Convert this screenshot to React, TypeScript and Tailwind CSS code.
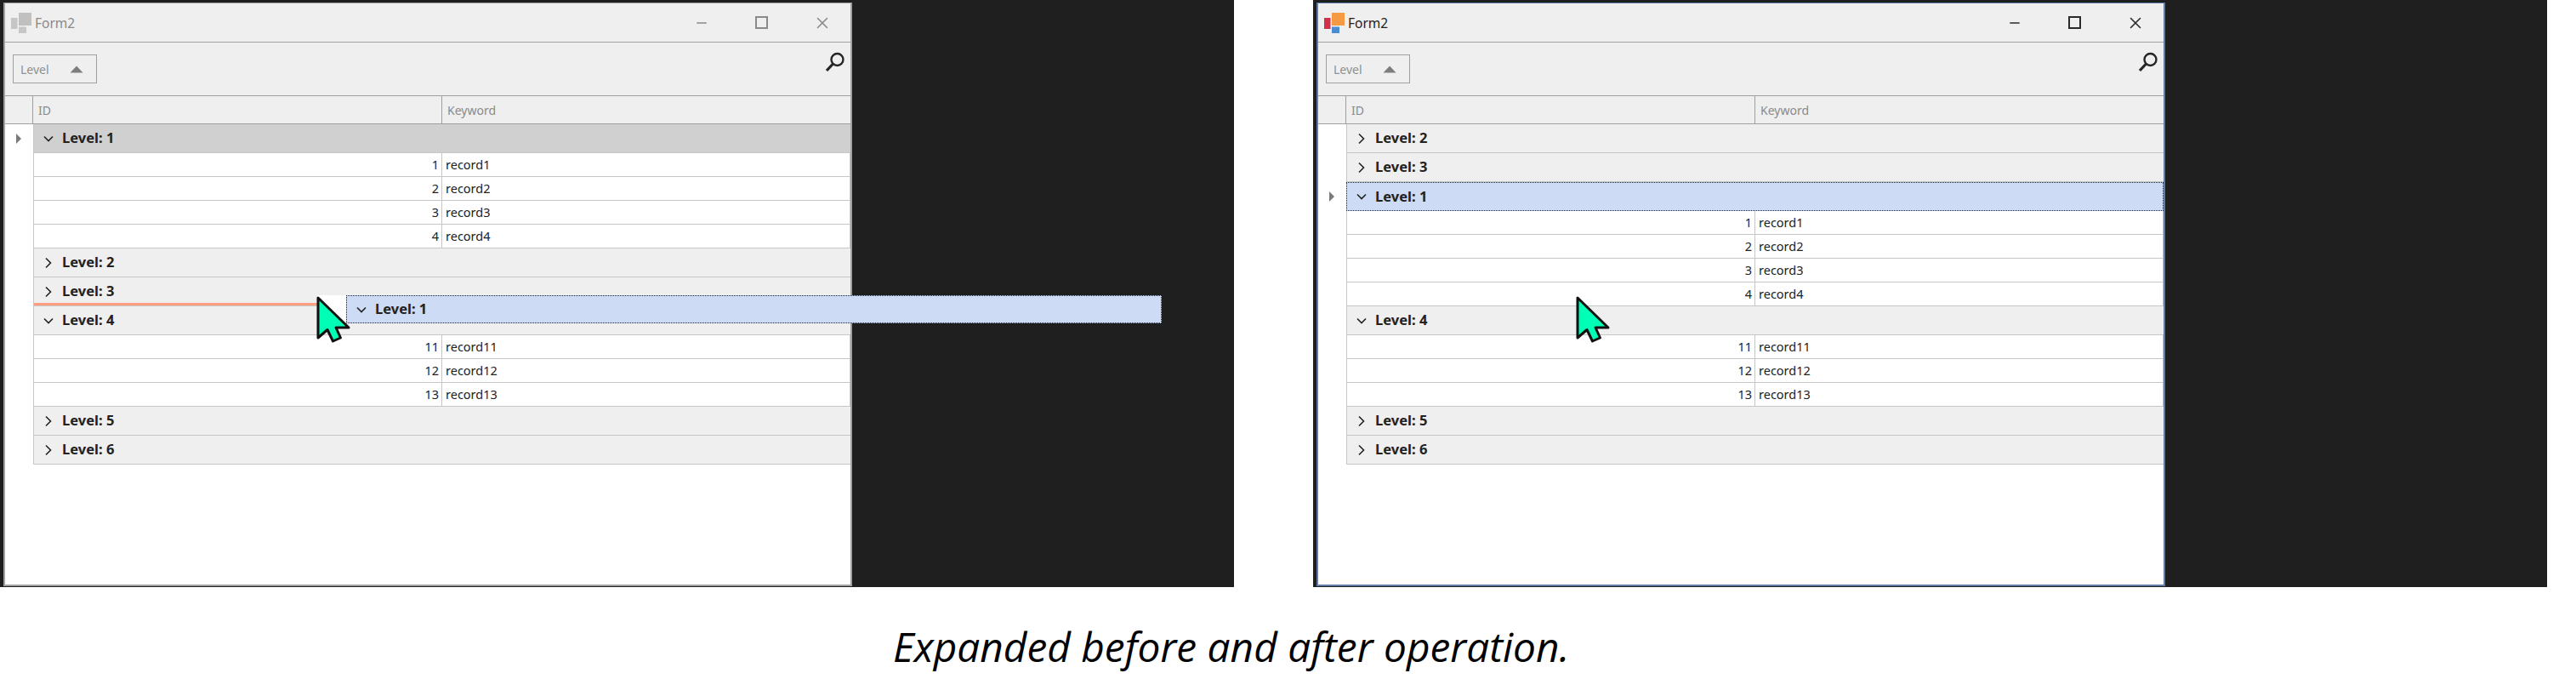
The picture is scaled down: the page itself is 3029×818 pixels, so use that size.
import { Minus, X } from "lucide-react";

const font = "font-['Noto_Sans',sans-serif]";

function Chevron({ open }: { open: boolean }) {
  return open ? (
    <svg width="14" height="10" viewBox="0 0 14 10" className="ml-[10px] shrink-0">
      <path d="M2 2.5 L7 7.5 L12 2.5" fill="none" stroke="#222" strokeWidth="1.6" />
    </svg>
  ) : (
    <svg width="10" height="14" viewBox="0 0 10 14" className="ml-[12px] mr-[2px] shrink-0">
      <path d="M2 1.5 L7.5 7 L2 12.5" fill="none" stroke="#222" strokeWidth="1.6" />
    </svg>
  );
}

function Indicator({ active }: { active?: boolean }) {
  return (
    <div className="flex w-[33px] shrink-0 items-center justify-center bg-white">
      {active && (
        <svg width="8" height="12" viewBox="0 0 8 12" className="mr-[1px]">
          <path d="M1 0 L7 6 L1 12 Z" fill="#7a7a7a" />
        </svg>
      )}
    </div>
  );
}

function GroupRow({
  level,
  open,
  tone,
  active,
}: {
  level: number;
  open?: boolean;
  tone?: "selected" | "focus";
  active?: boolean;
}) {
  return (
    <div className="flex h-[34px]">
      <Indicator active={active} />
      {tone === "focus" ? (
        <div className="flex flex-1 items-center border border-dotted border-[#222] bg-[#cddbf5]">
          <Chevron open={!!open} />
          <span className="ml-[9px] text-[16.5px] font-bold text-[#222]">Level: {level}</span>
        </div>
      ) : (
        <div
          className={`flex flex-1 items-center border-b border-l border-[#c6c6c6] ${
            tone === "selected" ? "bg-[#d0d0d0]" : "bg-[#efefef]"
          }`}
        >
          <Chevron open={!!open} />
          <span className="ml-[9px] text-[16.5px] font-bold text-[#222]">Level: {level}</span>
        </div>
      )}
    </div>
  );
}

function DataRow({ id }: { id: number }) {
  return (
    <div className="flex h-[28px]">
      <Indicator />
      <div className="flex flex-1 border-b border-l border-r border-[#c6c6c6] bg-white text-[14.5px] text-[#222]">
        <div className="flex w-[480px] items-center justify-end border-r border-[#c6c6c6] pr-[3px]">{id}</div>
        <div className="flex flex-1 items-center pl-[4px]">record{id}</div>
      </div>
    </div>
  );
}

function Logo({ active }: { active: boolean }) {
  return (
    <svg width="24" height="24" viewBox="0 0 24 24" className="shrink-0">
      <rect x="0" y="6" width="7.5" height="13" fill={active ? "#d42f4a" : "#c6c6c6"} />
      <rect x="9" y="0" width="15" height="15" fill={active ? "#f59a42" : "#c0c0c0"} />
      <rect x="9" y="16.5" width="9" height="7.5" fill={active ? "#4b8bd0" : "#c6c6c6"} />
    </svg>
  );
}

function SearchGlyph() {
  return (
    <svg width="24" height="24" viewBox="0 0 24 24" className="shrink-0">
      <circle cx="14.5" cy="9" r="7" fill="none" stroke="#262626" strokeWidth="2.4" />
      <path d="M9.5 14 L2 22" stroke="#262626" strokeWidth="3.2" />
    </svg>
  );
}

function Cursor() {
  return (
    <svg width="44" height="58" viewBox="0 0 44 58" className="absolute top-[345px]">
      <path
        d="M3 5 V52 L14 42.5 L20.5 56 L29.5 52 L24 40 H39 Z"
        fill="#00ffb6"
        stroke="#111"
        strokeWidth="3"
        strokeLinejoin="round"
      />
    </svg>
  );
}

function Form({ active, rows }: { active: boolean; rows: React.ReactNode }) {
  const chrome = active ? "text-[#2b2b2b]" : "text-[#8a8a8a]";
  return (
    <div
      className={`flex h-[686px] w-[998px] flex-col border-x-2 border-b-2 border-t bg-white ${
        active ? "border-[#5d7da8]" : "border-[#a0a0a0]"
      }`}
    >
      <div className="flex h-[46px] shrink-0 items-center border-b border-[#a0a0a0] bg-[#efefef] pl-[7px]">
        <Logo active={active} />
        <span className={`ml-[4px] mt-[2px] text-[15.5px] ${active ? "text-[#222]" : "text-[#8a8a8a]"}`}>Form2</span>
        <div className={`-mr-[2px] ml-auto flex items-center ${chrome}`}>
          <div className="flex w-[71px] justify-center">
            <Minus size={18} strokeWidth={1.3} absoluteStrokeWidth />
          </div>
          <div className="flex w-[71px] justify-center">
            <div className="h-[15px] w-[15px] border-2 border-current" />
          </div>
          <div className="flex w-[71px] justify-center">
            <X size={22} strokeWidth={1.6} absoluteStrokeWidth />
          </div>
        </div>
      </div>
      <div className="flex h-[63px] shrink-0 items-start justify-between border-b border-[#a0a0a0] bg-[#efefef] pl-[9px] pr-[6px] pt-[14px]">
        <div className="flex h-[34px] w-[99px] items-center border border-[#a0a0a0] pl-[8px] text-[14px] text-[#8f8f8f]">
          Level
          <svg width="16" height="9" viewBox="0 0 16 9" className="ml-[24px]">
            <path d="M8 0.5 L15.5 8.5 H0.5 Z" fill="#7d7d7d" />
          </svg>
        </div>
        <div className="-mt-[3px]">
          <SearchGlyph />
        </div>
      </div>
      <div className="flex h-[33px] shrink-0 border-b border-[#a0a0a0] bg-[#efefef] text-[14px] text-[#8a8a8a]">
        <div className="w-[33px] border-r border-[#a0a0a0]" />
        <div className="flex w-[481px] items-center border-r border-[#a0a0a0] pl-[6px]">ID</div>
        <div className="flex flex-1 items-center pl-[6px]">Keyword</div>
      </div>
      <div className="flex flex-1 flex-col">{rows}</div>
    </div>
  );
}

function Screen({ children, overlay }: { children: React.ReactNode; overlay?: React.ReactNode }) {
  return (
    <div className="relative h-[690px] w-[1451px] shrink-0 bg-[#1f1f1f] pl-[4px] pt-[3px]">
      {children}
      {overlay}
    </div>
  );
}

export default function App() {
  return (
    <div className={`${font} min-h-[818px] w-[3029px] bg-white`}>
      <div className="flex gap-[93px]">
        <Screen
          overlay={
            <>
              <div className="absolute left-[40px] top-[356px] h-[3px] w-[335px] bg-[#ff9f7f]" />
              <div className="absolute left-[373px] top-[347px] flex h-[33px] w-[993px]">
                <div className="w-[34px] bg-white" />
                <div className="flex flex-1 items-center border border-dotted border-[#222] bg-[#cddbf5]">
                  <Chevron open />
                  <span className="ml-[9px] text-[16.5px] font-bold text-[#222]">Level: 1</span>
                </div>
              </div>
              <div className="absolute inset-y-0 left-[371px] w-[44px]">
                <Cursor />
              </div>
            </>
          }
        >
          <Form
            active={false}
            rows={
              <>
                <GroupRow level={1} open tone="selected" active />
                {[1, 2, 3, 4].map((id) => (
                  <DataRow key={id} id={id} />
                ))}
                <GroupRow level={2} />
                <GroupRow level={3} />
                <GroupRow level={4} open />
                {[11, 12, 13].map((id) => (
                  <DataRow key={id} id={id} />
                ))}
                <GroupRow level={5} />
                <GroupRow level={6} />
              </>
            }
          />
        </Screen>
        <Screen
          overlay={
            <div className="absolute inset-y-0 left-[308px] w-[44px]">
              <Cursor />
            </div>
          }
        >
          <Form
            active
            rows={
              <>
                <GroupRow level={2} />
                <GroupRow level={3} />
                <GroupRow level={1} open tone="focus" active />
                {[1, 2, 3, 4].map((id) => (
                  <DataRow key={id} id={id} />
                ))}
                <GroupRow level={4} open />
                {[11, 12, 13].map((id) => (
                  <DataRow key={id} id={id} />
                ))}
                <GroupRow level={5} />
                <GroupRow level={6} />
              </>
            }
          />
        </Screen>
      </div>
      <p className="ml-[1050px] mt-[40px] font-['Open_Sans',sans-serif] text-[47.8px] italic leading-[60px] text-black">
        Expanded before and after operation.
      </p>
    </div>
  );
}
